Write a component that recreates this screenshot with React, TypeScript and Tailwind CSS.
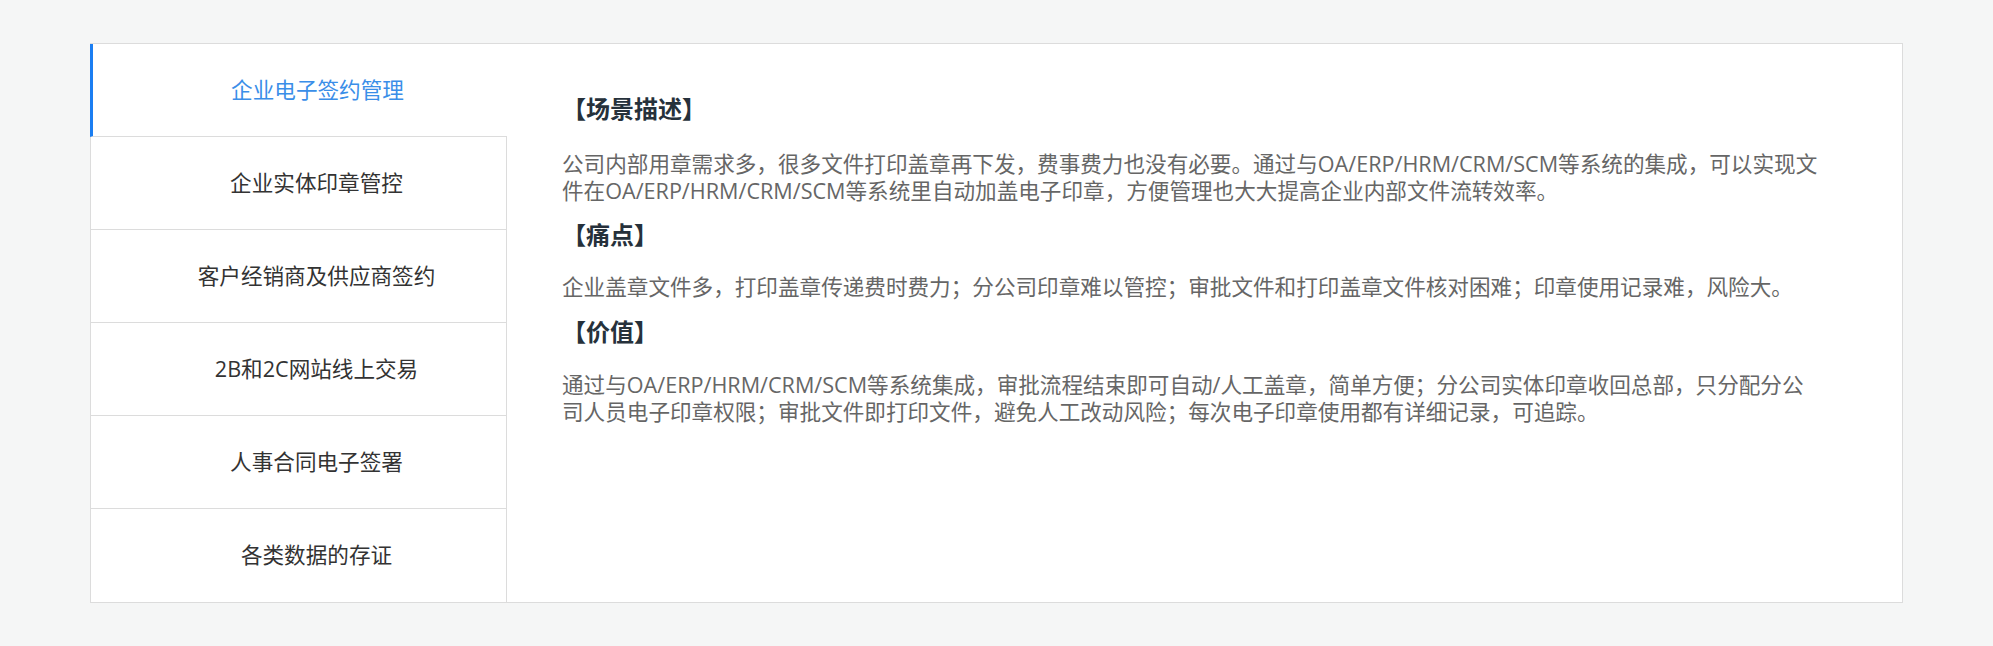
import { useState } from 'react';

const tabs = [
  '企业电子签约管理',
  '企业实体印章管控',
  '客户经销商及供应商签约',
  '2B和2C网站线上交易',
  '人事合同电子签署',
  '各类数据的存证',
];

const font = { fontFamily: '"Open Sans", "Noto Sans CJK SC", sans-serif' };

export default function App() {
  const [active, setActive] = useState(0);

  return (
    <div className="min-h-[646px] w-full bg-[#f5f6f6] pt-[43px]" style={font}>
      <div className="mx-[90px] flex h-[560px] border-y border-r border-[#dcdcdc] bg-white">
        {/* tab list */}
        <div className="flex w-[417px] shrink-0 flex-col">
          {tabs.map((t, i) => {
            const isActive = i === active;
            const last = i === tabs.length - 1;
            return (
              <button
                key={t}
                onClick={() => setActive(i)}
                className={`flex h-[93px] shrink-0 items-center justify-center pl-[36px] text-[21.6px] ${
                  last ? '' : 'border-b border-[#dcdcdc]'
                } ${
                  isActive
                    ? 'border-l-[3px] border-l-[#1b7ef2] pr-[1px] text-[#3a8ee8]'
                    : 'border-l border-r border-l-[#dcdcdc] border-r-[#dcdcdc] text-[#333]'
                }`}
              >
                {t}
              </button>
            );
          })}
        </div>

        {/* content */}
        <div className="flex-1 pl-[55px] pr-[60px] pt-[50px]">
          <h3 className="text-[24px] font-bold leading-[30px] text-[#26313b]">【场景描述】</h3>
          <p className="mt-[26px] text-[21.6px] leading-[27px] text-[#666]">
            公司内部用章需求多，很多文件打印盖章再下发，费事费力也没有必要。通过与OA/ERP/HRM/CRM/SCM等系统的集成，可以实现文
            <br />
            件在OA/ERP/HRM/CRM/SCM等系统里自动加盖电子印章，方便管理也大大提高企业内部文件流转效率。
          </p>
          <h3 className="mt-[16px] text-[24px] font-bold leading-[30px] text-[#26313b]">【痛点】</h3>
          <p className="mt-[23px] text-[21.6px] leading-[27px] text-[#666]">
            企业盖章文件多，打印盖章传递费时费力；分公司印章难以管控；审批文件和打印盖章文件核对困难；印章使用记录难，风险大。
          </p>
          <h3 className="mt-[17px] text-[24px] font-bold leading-[30px] text-[#26313b]">【价值】</h3>
          <p className="mt-[24px] text-[21.6px] leading-[27px] text-[#666]">
            通过与OA/ERP/HRM/CRM/SCM等系统集成，审批流程结束即可自动/人工盖章，简单方便；分公司实体印章收回总部，只分配分公
            <br />
            司人员电子印章权限；审批文件即打印文件，避免人工改动风险；每次电子印章使用都有详细记录，可追踪。
          </p>
        </div>
      </div>
    </div>
  );
}
